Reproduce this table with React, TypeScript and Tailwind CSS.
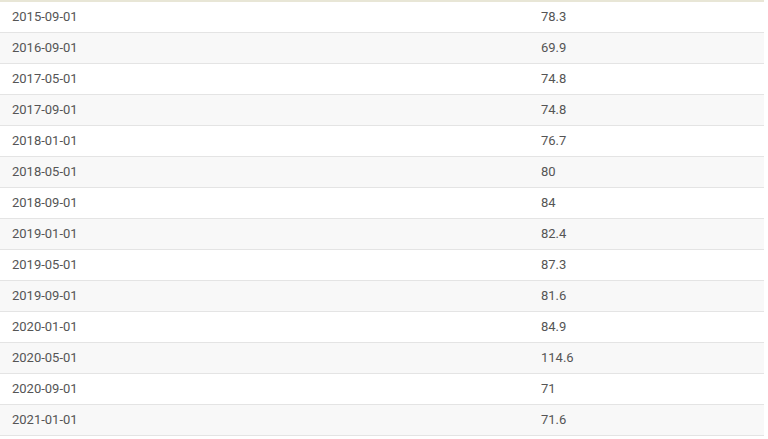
const rows: [string, string][] = [
  ["2015-09-01", "78.3"],
  ["2016-09-01", "69.9"],
  ["2017-05-01", "74.8"],
  ["2017-09-01", "74.8"],
  ["2018-01-01", "76.7"],
  ["2018-05-01", "80"],
  ["2018-09-01", "84"],
  ["2019-01-01", "82.4"],
  ["2019-05-01", "87.3"],
  ["2019-09-01", "81.6"],
  ["2020-01-01", "84.9"],
  ["2020-05-01", "114.6"],
  ["2020-09-01", "71"],
  ["2021-01-01", "71.6"],
];

export default function App() {
  return (
    <div className="w-[768px] h-[439px] bg-white overflow-hidden font-['Roboto',sans-serif]">
      <div className="w-[764px] border-t-2 border-[#e8e6d6]">
        {rows.map(([date, value], i) => (
          <div
            key={date}
            className={`flex h-[31px] items-center border-b border-[#e4e4e4] text-[13px] text-[#555] ${
              i % 2 === 1 ? "bg-[#f8f8f8]" : "bg-white"
            }`}
          >
            <div className="w-[529px] pl-3">{date}</div>
            <div className="flex-1 pl-3">{value}</div>
          </div>
        ))}
      </div>
    </div>
  );
}
